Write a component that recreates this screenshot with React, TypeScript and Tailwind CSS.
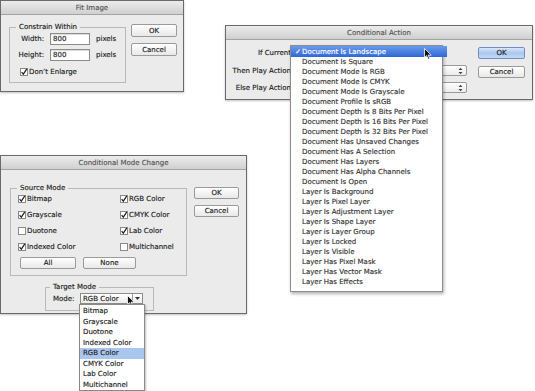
import React from "react";

function Win({ className, title, children }: { className: string; title: string; children: React.ReactNode }) {
  return (
    <div className={`absolute flex flex-col border border-[#6a6a6a] bg-[#ebebeb] shadow-[0_1px_2px_rgba(0,0,0,0.25)] ${className}`}>
      <div className="h-[14px] shrink-0 flex items-center justify-center border-b border-[#a3a3a3] bg-linear-to-b from-[#ececec] to-[#d0d0d0] text-[#555] leading-[10px]">
        {title}
      </div>
      <div className="flex flex-1">{children}</div>
    </div>
  );
}

function Btn({ className, children, primary }: { className: string; children: React.ReactNode; primary?: boolean }) {
  return (
    <div
      className={`flex items-center justify-center rounded-[2px] border leading-[10px] ${
        primary
          ? "border-[#6f8fc4] bg-linear-to-b from-[#dbe8f8] via-[#a9c6ee] to-[#c4daf6] text-[#1c1c1c]"
          : "border-[#9a9a9a] bg-linear-to-b from-white to-[#e8e8e8] text-[#222]"
      } ${className}`}
    >
      {children}
    </div>
  );
}

function Check({ on }: { on: boolean }) {
  return (
    <svg width="8" height="8" viewBox="0 0 8 8" className="shrink-0">
      <rect x="0.5" y="0.5" width="7" height="7" fill="white" stroke="#8a8a8a" />
      {on && <path d="M1.6 4.2 L3.3 6.2 L6.8 0.8" fill="none" stroke="#222" strokeWidth="1.2" />}
    </svg>
  );
}

function Cursor() {
  return (
    <svg width="8" height="12" viewBox="0 0 8 12">
      <path d="M0.5 0.5 L0.5 9.5 L2.6 7.6 L4.2 11.2 L5.6 10.6 L4.1 7.1 L7.2 7.1 Z" fill="#111" stroke="white" strokeWidth="0.8" />
    </svg>
  );
}

function UpDown() {
  return (
    <svg width="5" height="8" viewBox="0 0 5 8">
      <path d="M0.5 3 L2.5 0.8 L4.5 3 Z M0.5 5 L2.5 7.2 L4.5 5 Z" fill="#444" />
    </svg>
  );
}

const actionItems = [
  "Document Is Square",
  "Document Mode Is RGB",
  "Document Mode Is CMYK",
  "Document Mode Is Grayscale",
  "Document Profile Is sRGB",
  "Document Depth Is 8 Bits Per Pixel",
  "Document Depth Is 16 Bits Per Pixel",
  "Document Depth Is 32 Bits Per Pixel",
  "Document Has Unsaved Changes",
  "Document Has A Selection",
  "Document Has Layers",
  "Document Has Alpha Channels",
  "Document Is Open",
  "Layer Is Background",
  "Layer Is Pixel Layer",
  "Layer Is Adjustment Layer",
  "Layer Is Shape Layer",
  "Layer is Layer Group",
  "Layer Is Locked",
  "Layer Is Visible",
  "Layer Has Pixel Mask",
  "Layer Has Vector Mask",
  "Layer Has Effects",
];

const modeItems = ["Bitmap", "Grayscale", "Duotone", "Indexed Color", "RGB Color", "CMYK Color", "Lab Color", "Multichannel"];

const sourceModes: [string, boolean][] = [
  ["Bitmap", true],
  ["RGB Color", true],
  ["Grayscale", true],
  ["CMYK Color", true],
  ["Duotone", false],
  ["Lab Color", true],
  ["Indexed Color", true],
  ["Multichannel", false],
];

export default function App() {
  return (
    <div className="relative w-[535px] h-[391px] overflow-hidden bg-white font-['DejaVu_Sans',Verdana,sans-serif] text-[7px] leading-[10px] text-[#222] [-webkit-text-stroke:0.15px_currentColor]">
      {/* Fit Image */}
      <Win className="left-0 top-0 w-[184px] h-[92px]" title="Fit Image">
        <fieldset className="ml-[8px] mt-[7px] h-[61px] w-[117px] border border-[#b9b9b9] px-0">
          <legend className="ml-[6px] px-[3px] leading-[10px]">Constrain Within</legend>
          <div className="flex flex-col pt-[1px]">
            <div className="flex h-[12px] items-center">
              <span className="w-[34px] text-right">Width:</span>
              <div className="ml-[6px] flex h-[12px] w-[40px] items-center border border-[#8c8c8c] bg-white pl-[2px] shadow-[inset_0_1px_1px_rgba(0,0,0,0.15)]">800</div>
              <span className="ml-[6px]">pixels</span>
            </div>
            <div className="mt-[4px] flex h-[12px] items-center">
              <span className="w-[34px] text-right">Height:</span>
              <div className="ml-[6px] flex h-[12px] w-[40px] items-center border border-[#8c8c8c] bg-white pl-[2px] shadow-[inset_0_1px_1px_rgba(0,0,0,0.15)]">800</div>
              <span className="ml-[6px]">pixels</span>
            </div>
            <div className="mt-[6px] flex h-[10px] items-center gap-[1px] pl-[10px]">
              <Check on />
              <span>Don’t Enlarge</span>
            </div>
          </div>
        </fieldset>
        <div className="ml-[5px] mt-[9px] flex flex-col gap-[6px]">
          <Btn className="h-[13px] w-[46px]">OK</Btn>
          <Btn className="h-[13px] w-[46px]">Cancel</Btn>
        </div>
      </Win>

      {/* Conditional Action */}
      <Win className="left-[225px] top-[25px] w-[308px] h-[75px]" title="Conditional Action">
        <div className="flex flex-col pt-[7px]">
          <div className="flex h-[11px] items-center">
            <span className="w-[65px] text-right">If Current</span>
          </div>
          <div className="mt-[7px] flex h-[11px] items-center">
            <span className="w-[65px] text-right">Then Play Action</span>
            <div className="ml-[4px] flex h-[11px] w-[172px] items-center justify-end rounded-[2px] border border-[#9a9a9a] bg-linear-to-b from-white to-[#ececec] pr-[3px]">
              <UpDown />
            </div>
          </div>
          <div className="mt-[6px] flex h-[11px] items-center">
            <span className="w-[65px] text-right">Else Play Action</span>
            <div className="ml-[4px] flex h-[11px] w-[172px] items-center justify-end rounded-[2px] border border-[#9a9a9a] bg-linear-to-b from-white to-[#ececec] pr-[3px]">
              <UpDown />
            </div>
          </div>
        </div>
        <div className="ml-[11px] mt-[7px] flex flex-col gap-[7px]">
          <Btn primary className="h-[12px] w-[47px]">OK</Btn>
          <Btn className="h-[12px] w-[47px]">Cancel</Btn>
        </div>
      </Win>

      {/* Conditional Action menu */}
      <div className="absolute left-[290px] top-[45px] flex w-[153px] flex-col border border-[#8c8c8c] bg-white pb-[4px] text-[#333] shadow-[1px_2px_3px_rgba(0,0,0,0.3)]">
        <div className="relative flex h-[11px] w-[156px] items-center bg-linear-to-b from-[#6b9bea] to-[#2f66d8] text-white">
          <span className="w-[11px] pl-[4px]">✓</span>
          <span>Document Is Landscape</span>
          <div className="absolute left-[133px] top-[2px]">
            <Cursor />
          </div>
        </div>
        {actionItems.map((t) => (
          <div key={t} className="flex h-[10px] items-center pl-[11px]">
            {t}
          </div>
        ))}
      </div>

      {/* Conditional Mode Change */}
      <Win className="left-0 top-[155px] w-[247px] h-[159px]" title="Conditional Mode Change">
        <div className="flex flex-col">
          <fieldset className="ml-[9px] mt-[13px] h-[93px] w-[177px] border border-[#b9b9b9] px-0">
            <legend className="ml-[6px] px-[3px] leading-[10px]">Source Mode</legend>
            <div className="grid grid-cols-[102px_1fr] gap-y-[6px] pl-[7px] pt-[1px]">
              {sourceModes.map(([label, on]) => (
                <div key={label} className="flex h-[10px] items-center gap-[1px]">
                  <Check on={on} />
                  <span>{label}</span>
                </div>
              ))}
            </div>
            <div className="ml-[9px] mt-[5px] flex gap-[7px]">
              <Btn className="h-[12px] w-[56px]">All</Btn>
              <Btn className="h-[12px] w-[53px]">None</Btn>
            </div>
          </fieldset>
          <fieldset className="ml-[44px] mt-[6px] h-[29px] w-[109px] border border-[#b9b9b9] px-0">
            <legend className="ml-[4px] px-[3px] leading-[10px]">Target Mode</legend>
            <div className="flex items-center pl-[7px] pt-[1px]">
              <span className="w-[27px]">Mode:</span>
              <div className="relative flex h-[11px] w-[63px] items-center border border-[#8c8c8c] bg-linear-to-b from-white to-[#ececec]">
                <span className="flex-1 pl-[2px]">RGB Color</span>
                <div className="flex h-full w-[10px] items-center justify-center border-l border-[#9a9a9a]">
                  <svg width="5" height="3" viewBox="0 0 5 3">
                    <path d="M0 0 L5 0 L2.5 3 Z" fill="#333" />
                  </svg>
                </div>
                <div className="absolute left-[46px] top-[1px]">
                  <Cursor />
                </div>
              </div>
            </div>
          </fieldset>
        </div>
        <div className="ml-[7px] mt-[17px] flex flex-col gap-[6px]">
          <Btn className="h-[12px] w-[45px]">OK</Btn>
          <Btn className="h-[12px] w-[45px]">Cancel</Btn>
        </div>
      </Win>

      {/* Mode dropdown list */}
      <div className="absolute left-[79px] top-[304px] flex w-[66px] flex-col border border-[#8a8a8a] bg-white pt-[1px] shadow-[1px_1px_2px_rgba(0,0,0,0.25)]">
        {modeItems.map((t) => (
          <div key={t} className={`h-[10.5px] pl-[3px] leading-[10.5px] ${t === "RGB Color" ? "bg-[#a9c6ef]" : ""}`}>
            {t}
          </div>
        ))}
      </div>
    </div>
  );
}
